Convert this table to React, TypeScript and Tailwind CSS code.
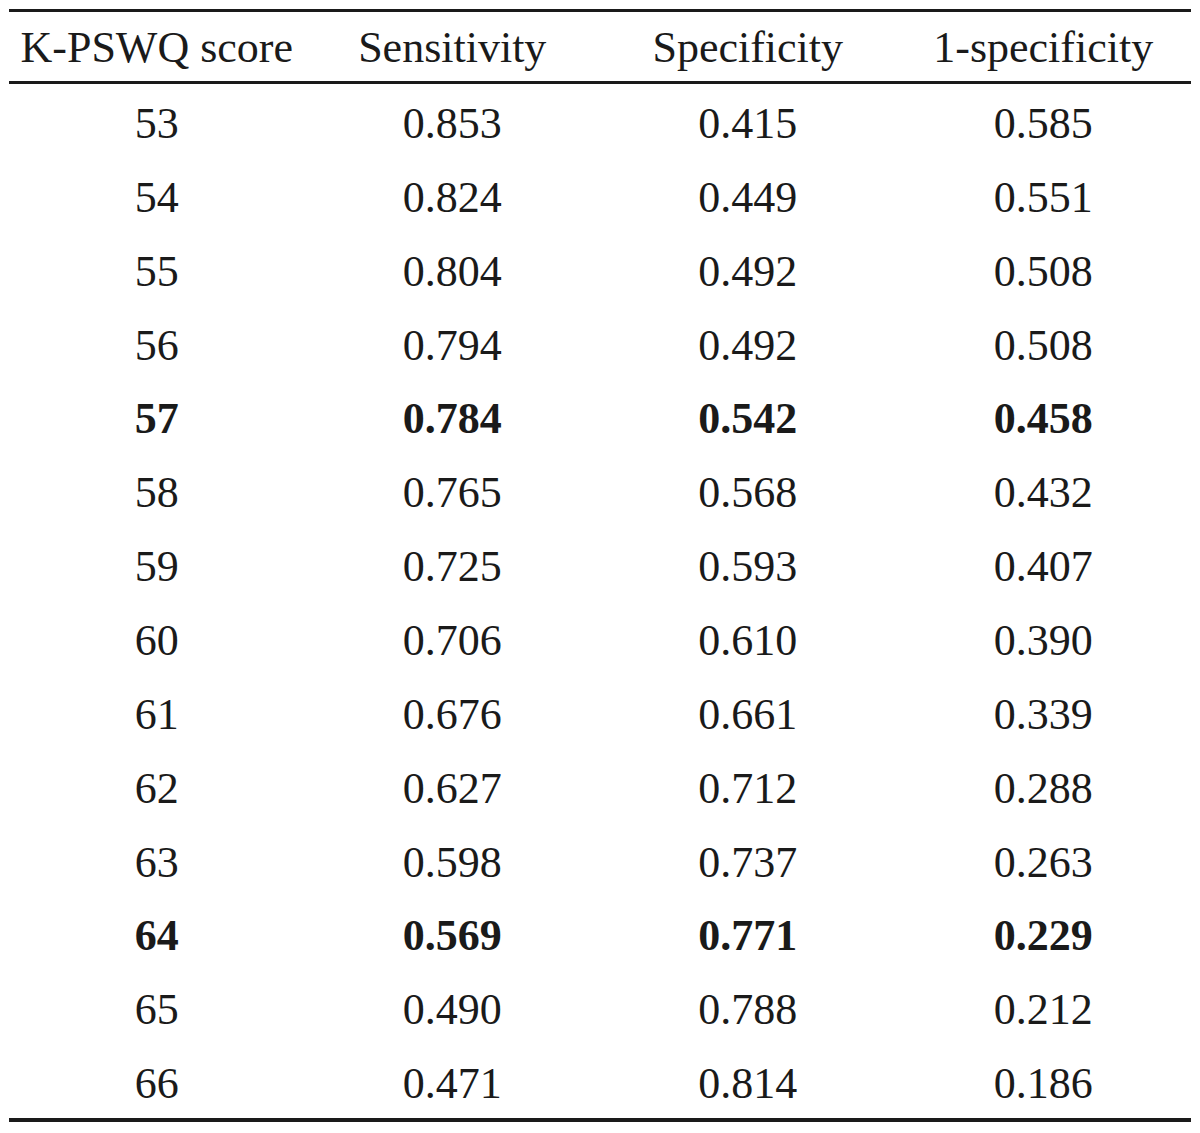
const rows: [string, string, string, string, boolean][] = [
  ["53", "0.853", "0.415", "0.585", false],
  ["54", "0.824", "0.449", "0.551", false],
  ["55", "0.804", "0.492", "0.508", false],
  ["56", "0.794", "0.492", "0.508", false],
  ["57", "0.784", "0.542", "0.458", true],
  ["58", "0.765", "0.568", "0.432", false],
  ["59", "0.725", "0.593", "0.407", false],
  ["60", "0.706", "0.610", "0.390", false],
  ["61", "0.676", "0.661", "0.339", false],
  ["62", "0.627", "0.712", "0.288", false],
  ["63", "0.598", "0.737", "0.263", false],
  ["64", "0.569", "0.771", "0.229", true],
  ["65", "0.490", "0.788", "0.212", false],
  ["66", "0.471", "0.814", "0.186", false],
];

const headers = ["K-PSWQ score", "Sensitivity", "Specificity", "1-specificity"];

export default function App() {
  return (
    <div
      className="min-h-[1133px] w-[1200px] bg-white pt-[9px] text-[#1a1a1a]"
      style={{ fontFamily: '"Liberation Serif", "DejaVu Serif", serif' }}
    >
      <div className="mx-[9px] border-t-[3px] border-b-4 border-[#1a1a1a]">
        <div className="grid h-[72px] grid-cols-4 items-center border-b-[3px] border-[#1a1a1a] pt-[2px] text-[44px]">
          {headers.map((h) => (
            <div key={h} className="text-center leading-none">
              {h}
            </div>
          ))}
        </div>
        {rows.map(([a, b, c, d, bold]) => (
          <div
            key={a}
            className={
              "grid h-[73.86px] grid-cols-4 items-center pt-[6px] text-[44px] " +
              (bold ? "font-bold" : "")
            }
          >
            {[a, b, c, d].map((v, i) => (
              <div key={i} className="text-center leading-none">
                {v}
              </div>
            ))}
          </div>
        ))}
      </div>
    </div>
  );
}
